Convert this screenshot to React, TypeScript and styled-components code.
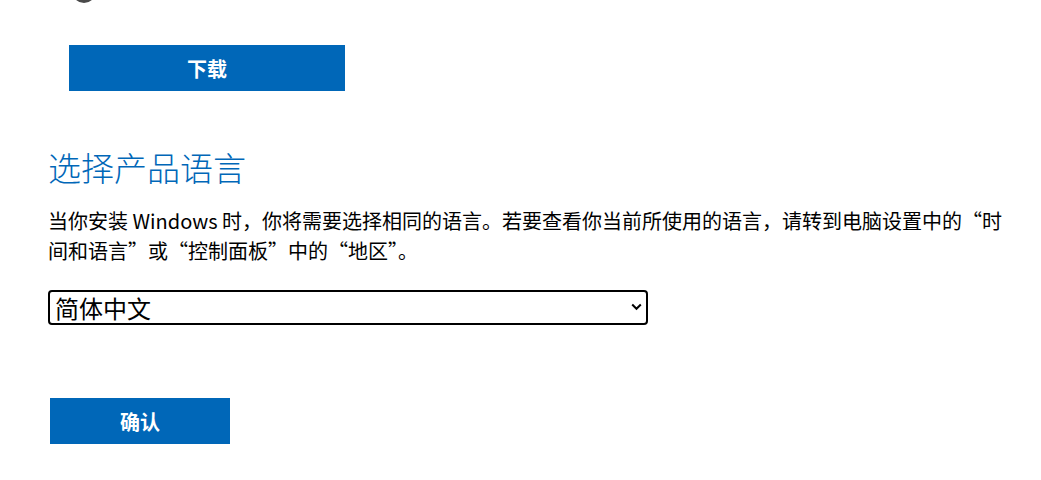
import { useState } from 'react';
import styled, { createGlobalStyle } from 'styled-components';

// 微软下载页：下载按钮 + 选择产品语言 + 下拉框 + 确认
const GlobalStyle = createGlobalStyle`
  html, body {
    margin: 0;
    padding: 0;
    background: #fff;
  }
  body {
    font-family: "Noto Sans CJK SC", "Noto Sans", sans-serif;
    color: #000;
  }
`;

const Page = styled.main`
  display: flex;
  flex-direction: column;
  align-items: flex-start;
  padding-left: 48px;
  width: 962px;
`;

// 上一段内容的残影（被视口截掉的圆形）
const Spinner = styled.div`
  width: 24px;
  height: 24px;
  margin: -21px 0 0 24px;
  border-radius: 50%;
  background: #4a4a4a;
`;

const PrimaryButton = styled.button<{ $width: number; $offset: number }>`
  width: ${({ $width }) => $width}px;
  height: 46px;
  margin-left: ${({ $offset }) => $offset}px;
  border: none;
  border-radius: 0;
  background: #0067b8;
  color: #fff;
  font-family: "Noto Sans CJK SC", sans-serif;
  font-size: 20px;
  font-weight: 700;
  cursor: pointer;
`;

const Heading = styled.h2`
  margin: 56px 0 0;
  font-size: 33px;
  font-weight: 300;
  line-height: 40px;
  color: #0067b8;
`;

const Intro = styled.p`
  margin: 19px 0 0;
  font-size: 20px;
  line-height: 30px;
`;

// 下拉框外壳：自绘箭头覆盖在右侧
const SelectWrap = styled.div`
  position: relative;
  width: 600px;
  margin-top: 24px;
`;

const LangSelect = styled.select`
  display: block;
  width: 100%;
  height: 35px;
  padding: 0 28px 0 5px;
  appearance: none;
  border: 2px solid #000;
  border-radius: 4px;
  background: #fff;
  color: #000;
  font-family: "Noto Sans CJK SC", sans-serif;
  font-size: 24px;
  line-height: 31px;
`;

const Chevron = styled.svg`
  position: absolute;
  top: 13px;
  right: 6px;
  pointer-events: none;
`;

const Actions = styled.div`
  margin-top: 73px;
`;

const LANGS = ['简体中文', '繁體中文', 'English (United States)', '日本語', '한국어'];

export default function App() {
  const [lang, setLang] = useState(LANGS[0]);

  return (
    <>
      <GlobalStyle />
      <Page>
        <Spinner />
        <PrimaryButton type="button" $width={276} $offset={21} style={{ marginTop: 42 }}>
          下载
        </PrimaryButton>

        <Heading>选择产品语言</Heading>
        <Intro>
          当你安装 Windows 时，你将需要选择相同的语言。若要查看你当前所使用的语言，请转到电脑设置中的“时间和语言”或“控制面板”中的“地区”。
        </Intro>

        <SelectWrap>
          <LangSelect value={lang} onChange={(e) => setLang(e.target.value)} aria-label="产品语言">
            {LANGS.map((l) => (
              <option key={l} value={l}>
                {l}
              </option>
            ))}
          </LangSelect>
          <Chevron width="11" height="8" viewBox="0 0 11 8" aria-hidden>
            <path d="M1.2 1.5 5.5 5.8 9.8 1.5" fill="none" stroke="#000" strokeWidth="2" />
          </Chevron>
        </SelectWrap>

        <Actions>
          <PrimaryButton type="button" $width={180} $offset={2}>
            确认
          </PrimaryButton>
        </Actions>
      </Page>
    </>
  );
}
